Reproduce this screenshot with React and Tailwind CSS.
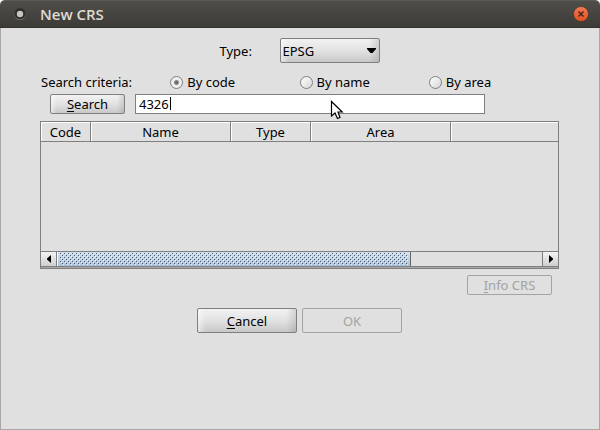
import React from "react";

const columns = [
  { label: "Code", width: "w-[50px]" },
  { label: "Name", width: "w-[140px]" },
  { label: "Type", width: "w-[80px]" },
  { label: "Area", width: "w-[140px]" },
  { label: "", width: "" },
];

const criteria = ["By code", "By name", "By area"];

const raised =
  "border-[#7f7f7f] text-black bg-[linear-gradient(to_right,rgba(255,255,255,0.5),transparent_8%,transparent_90%,rgba(110,110,110,0.22)),linear-gradient(#f2f2f2,#e0e0e0_55%,#c8c8c8)]";

function Button({ children, className, disabled }) {
  return (
    <button
      type="button"
      disabled={disabled}
      className={`flex items-center justify-center rounded-[2px] border leading-4 ${
        disabled ? "border-[#a3a3a3] text-[#a3a3a3]" : raised
      } ${className}`}
    >
      {children}
    </button>
  );
}

function Mnemonic({ text }) {
  return (
    <span>
      <span className="underline decoration-1 underline-offset-2">{text[0]}</span>
      {text.slice(1)}
    </span>
  );
}

function ArrowButton({ label, path, className }) {
  return (
    <button
      type="button"
      aria-label={label}
      className={`flex w-4 shrink-0 items-center justify-center border-t border-b border-[#7f7f7f] bg-linear-to-b from-[#f4f4f4] to-[#cfcfcf] ${className}`}
    >
      <svg width="4" height="8" viewBox="0 0 4 8" aria-hidden="true">
        <path d={path} fill="#000" />
      </svg>
    </button>
  );
}

function TitleBar() {
  return (
    <header className="flex h-7 items-center rounded-t-[5px] border-t border-b border-t-[#5b5a55] border-b-[#33322e] bg-linear-to-b from-[#4f4e49] to-[#3c3b37] pr-[11px] pl-[13px]">
      <svg width="14" height="14" viewBox="0 0 14 14" aria-hidden="true">
        <ellipse cx="7" cy="7.6" rx="5.5" ry="5.4" fill="#77756d" />
        <circle cx="7" cy="6.6" r="5.6" fill="#302f2c" />
        <circle cx="7" cy="7" r="3.2" fill="#c9c5be" />
      </svg>
      <h1 className="ml-[13px] flex-1 font-['Open_Sans','Noto_Sans',sans-serif] text-[15px] leading-5 font-semibold text-[#dfdbd2]">
        New CRS
      </h1>
      <button type="button" aria-label="Close" className="h-4 w-4">
        <svg width="16" height="16" viewBox="0 0 16 16" aria-hidden="true">
          <defs>
            <linearGradient id="close" x1="0" y1="0" x2="0" y2="1">
              <stop offset="0" stopColor="#f37b55" />
              <stop offset="1" stopColor="#e0501f" />
            </linearGradient>
          </defs>
          <circle cx="8" cy="8" r="7.5" fill="url(#close)" stroke="#38352f" strokeWidth="0.6" />
          <path d="M5.5 5.5 L10.5 10.5 M10.5 5.5 L5.5 10.5" stroke="#4a251a" strokeWidth="1.5" />
        </svg>
      </button>
    </header>
  );
}

export default function App() {
  return (
    <div className="bg-white font-['Noto_Sans',sans-serif] text-[13px] leading-4 text-black">
      <div className="flex min-h-screen flex-col">
        <TitleBar />
        <main className="flex flex-1 flex-col border-x border-b border-[#aaa6a1] bg-[#e0e0e0] pt-[10px] pr-[41px] pl-10">
          <div className="flex items-center justify-center">
            <label htmlFor="type" className="w-[60px]">
              Type:
            </label>
            <div className="relative w-[100px]">
              <select
                id="type"
                defaultValue="EPSG"
                className={`block h-[25px] w-full appearance-none rounded-[2px] border pr-4 pl-[2px] ${raised}`}
              >
                <option>EPSG</option>
              </select>
              <svg
                width="9"
                height="5"
                viewBox="0 0 9 5"
                aria-hidden="true"
                className="pointer-events-none absolute top-[10px] right-1"
              >
                <path d="M0 0 H9 V1 L5.5 5 H3.5 L0 1 Z" fill="#000" />
              </svg>
            </div>
          </div>

          <fieldset className="mt-[11px] grid grid-cols-4" aria-label="Search criteria">
            <span>Search criteria:</span>
            {criteria.map((name, i) => (
              <label key={name} className="flex items-center gap-1">
                <input
                  type="radio"
                  name="criteria"
                  defaultChecked={i === 0}
                  className="h-[13px] w-[13px] appearance-none rounded-full border border-[#7f7f7f] bg-linear-to-br from-white to-[#d6d6d6] checked:bg-[radial-gradient(circle,#6a6a6a_0_1px,#8a8a8a_2px,#eeeeee_3px)]"
                />
                {name}
              </label>
            ))}
          </fieldset>

          <div className="mt-1 flex gap-[10px] pr-[73px] pl-[9px]">
            <Button className="h-5 w-[75px]">
              <Mnemonic text="Search" />
            </Button>
            <div className="relative flex-1">
              <input
                type="text"
                aria-label="Search value"
                defaultValue="4326"
                className="block h-5 w-full border border-[#7f7f7f] bg-white px-[3px] leading-4 outline-none"
              />
              <span className="absolute top-[3px] left-[35px] h-[13px] w-px bg-black" />
              <svg
                width="14"
                height="21"
                viewBox="0 0 14 21"
                aria-hidden="true"
                className="pointer-events-none absolute top-[6px] left-[195px]"
              >
                <path
                  d="M1.5 1.5 V16 L5 13 L7.5 18.5 L10 17.5 L8 12 H12.2 Z"
                  fill="#fff"
                  stroke="#000"
                  strokeWidth="1.2"
                />
              </svg>
            </div>
          </div>

          <section className="-mx-px mt-[7px] border border-[#7f7f7f]" aria-label="Results">
            <div className="h-[129px]">
              <table className="w-full table-fixed border-separate border-spacing-0">
                <thead>
                  <tr>
                    {columns.map((c, i) => (
                      <th
                        key={i}
                        scope="col"
                        className={`h-5 border-b border-[#7f7f7f] p-0 font-normal shadow-[inset_1px_1px_0_#fff] not-last:border-r ${c.width}`}
                      >
                        {c.label}
                      </th>
                    ))}
                  </tr>
                </thead>
              </table>
            </div>
            <div className="flex h-[17px] border-b border-[#a8a8a8]">
              <ArrowButton label="Scroll left" path="M4 0 V8 L0 4.5 V3.5 Z" className="border-r" />
              <div className="flex-1 border-t border-b border-[#7f7f7f]">
                <div className="h-full w-[73%] border-r border-l border-r-[#666666] border-l-white bg-linear-to-b from-[#d4e2f0] to-[#acc1da] px-[2px] py-px">
                  <svg width="100%" height="100%" aria-hidden="true" className="block" shapeRendering="crispEdges">
                    <defs>
                      <pattern id="grip" width="4" height="4" patternUnits="userSpaceOnUse">
                        <path d="M0 0 H1 V1 H0 Z M2 2 H3 V3 H2 Z" fill="#4d5c6c" />
                        <path d="M1 1 H2 V2 H1 Z M3 3 H4 V4 H3 Z" fill="#e6eef7" />
                      </pattern>
                    </defs>
                    <rect width="100%" height="100%" fill="url(#grip)" />
                  </svg>
                </div>
              </div>
              <ArrowButton label="Scroll right" path="M0 0 V8 L4 4.5 V3.5 Z" className="border-l" />
            </div>
          </section>

          <div className="mt-[6px] flex justify-end pr-[6px]">
            <Button disabled className="h-5 w-[85px]">
              <Mnemonic text="Info CRS" />
            </Button>
          </div>

          <div className="mt-[13px] flex justify-center gap-[5px]">
            <Button className="h-[25px] w-[100px]">
              <Mnemonic text="Cancel" />
            </Button>
            <Button disabled className="h-[25px] w-[100px]">
              OK
            </Button>
          </div>
        </main>
      </div>
    </div>
  );
}
